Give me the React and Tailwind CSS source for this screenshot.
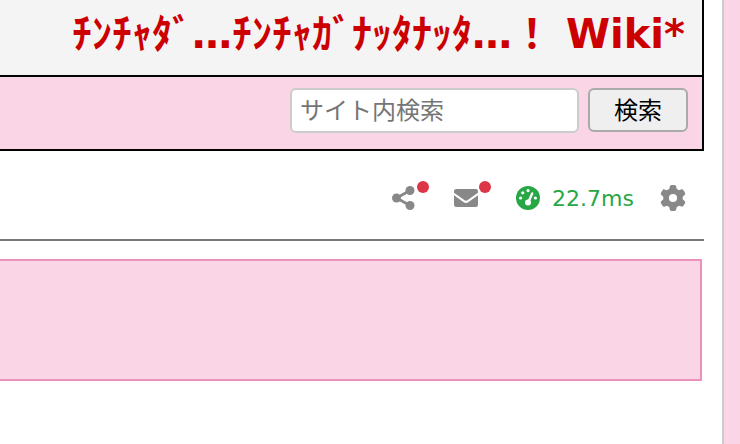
import React, { useState } from "react";
import { FaGear } from "react-icons/fa6";

function ShareIcon() {
    return (
        <svg className="w-6 h-6" viewBox="0 0 24 24" fill="currentColor" aria-hidden="true">
            <path d="M18 4.5 4.5 12 18 19.5" fill="none" stroke="currentColor" strokeWidth="2.8" />
            <circle cx="18" cy="4.5" r="4.5" />
            <circle cx="4.5" cy="12" r="4.5" />
            <circle cx="18" cy="19.5" r="4.5" />
        </svg>
    );
}

function MailIcon() {
    return (
        <svg className="w-6 h-6" viewBox="0 0 24 24" aria-hidden="true">
            <rect x="0" y="3" width="24" height="18" rx="2.25" fill="currentColor" />
            <path d="M-1 7.2 10 15.2Q12 16.5 14 15.2L25 7.2" fill="none" stroke="#ffffff" strokeWidth="2.1" />
        </svg>
    );
}

function GaugeIcon() {
    return (
        <svg className="w-6 h-6" viewBox="0 0 24 24" aria-hidden="true">
            <circle cx="12" cy="12" r="12" fill="currentColor" />
            <g fill="#ffffff">
                <circle cx="4.6" cy="12" r="1.6" />
                <circle cx="6.8" cy="6.8" r="1.6" />
                <circle cx="12" cy="4.6" r="1.6" />
                <circle cx="19.4" cy="12" r="1.6" />
                <circle cx="12" cy="16.6" r="3" />
            </g>
            <path d="M12.4 16 16.2 7.4" stroke="#ffffff" strokeWidth="2.4" strokeLinecap="round" />
        </svg>
    );
}

function Header() {
    return (
        <header className="h-[77px] pr-[17px] bg-[#f4f4f4] border-b-2 border-black flex justify-end">
            <h1 className="pt-2.5 text-[40px] leading-[48px] font-bold text-[#cc0000] whitespace-pre">ﾁﾝﾁｬﾀﾞ…ﾁﾝﾁｬｶﾞﾅｯﾀﾅｯﾀ…！ Wiki*</h1>
        </header>
    );
}

function Search() {
    const [texto, setTexto] = useState("");
    return (
        <form className="pt-[11px] pb-4 pr-[14px] flex justify-end items-start gap-[9px]" onSubmit={(e) => e.preventDefault()}>
            <input
                type="text"
                aria-label="サイト内検索"
                placeholder="サイト内検索"
                value={texto}
                onChange={(e) => setTexto(e.target.value)}
                className="w-[289px] h-[45px] px-2 bg-white border-2 border-[#cccccc] rounded-md text-2xl placeholder:text-[#757575]"
            />
            <button type="submit" className="w-[100px] h-11 pt-0.5 bg-[#efefef] border-2 border-[#aaaaaa] rounded-md text-2xl leading-none text-black">検索</button>
        </form>
    );
}

function Toolbar() {
    return (
        <nav className="h-[90px] pt-[31px] pr-[18px] border-b-2 border-[#777777] flex justify-end items-start text-[#888888]">
            <a href="#share" aria-label="共有" className="relative h-8 mr-[38px] flex items-center">
                <ShareIcon />
                <span className="absolute -top-px -right-[13px] w-3 h-3 rounded-full bg-[#dc3545]"></span>
            </a>
            <a href="#mail" aria-label="メール" className="relative h-8 mr-[38px] flex items-center">
                <MailIcon />
                <span className="absolute -top-px -right-[13px] w-3 h-3 rounded-full bg-[#dc3545]"></span>
            </a>
            <a href="#speed" className="h-8 mr-[26px] flex items-center gap-3 text-[22px] leading-8 text-[#28a745]">
                <GaugeIcon />
                <span className="pt-0.5">22.7ms</span>
            </a>
            <a href="#settings" aria-label="設定" className="h-8 flex items-center">
                <FaGear className="w-[26px] h-[26px]" />
            </a>
        </nav>
    );
}

export default function App() {
    return (
        <div className="min-h-screen flex bg-white font-['DejaVu_Sans','Noto_Sans_CJK_JP',sans-serif]">
            <main className="flex-1 min-w-0 pr-[18px]">
                <div className="bg-[#fad5e5] border-r-2 border-b-2 border-black">
                    <Header />
                    <Search />
                </div>
                <Toolbar />
                <section className="h-[122px] mt-[18px] mr-0.5 bg-[#fad5e5] border-2 border-l-0 border-[#eb92b9]"></section>
            </main>
            <aside className="w-[18px] shrink-0 bg-[#fad5e5] border-l-2 border-[#cccccc]"></aside>
        </div>
    );
}
